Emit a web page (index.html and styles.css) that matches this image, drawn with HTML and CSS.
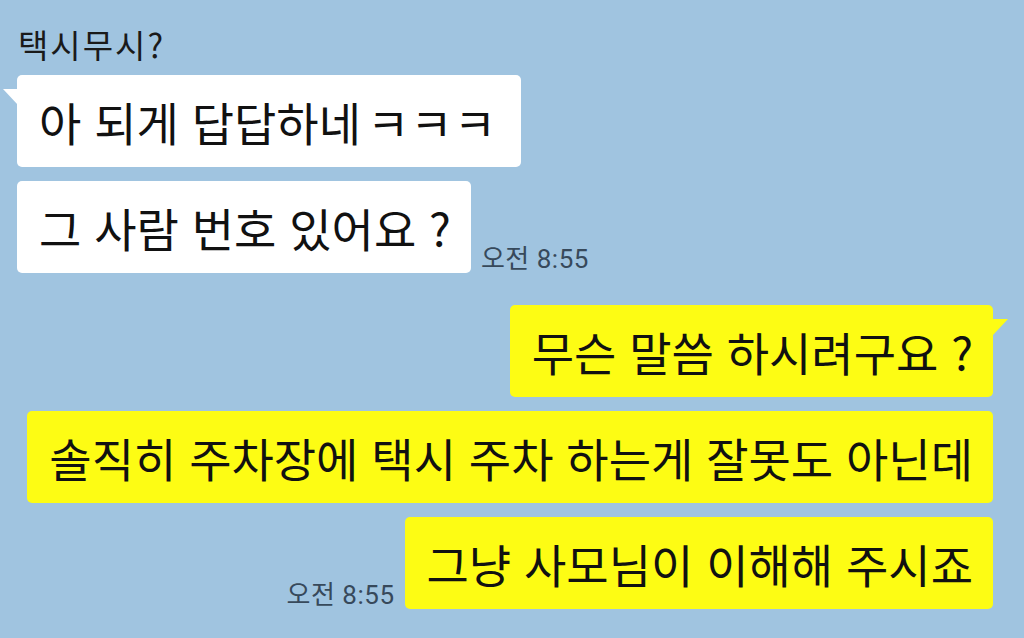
FILE: index.html
```html
<!DOCTYPE html>
<html lang="ko">
  <head>
    <meta charset="UTF-8" />
    <meta name="viewport" content="width=device-width, initial-scale=1.0" />
    <title>택시무시?</title>
    <link rel="stylesheet" href="styles.css">
  </head>
  <body>
    <div class="chat">
      <div class="group left">
        <div class="sender">택시무시?</div>
        <div class="row">
          <div class="bubble first">아 되게 답답하네 <span class="laugh">ㅋㅋㅋ</span></div>
        </div>
        <div class="row">
          <div class="bubble">그 사람 번호 있어요 ?</div>
          <span class="time">오전 8:55</span>
        </div>
      </div>

      <div class="group right">
        <div class="row">
          <div class="bubble first">무슨 말씀 하시려구요 ?</div>
        </div>
        <div class="row">
          <div class="bubble">솔직히 주차장에 택시 주차 하는게 잘못도 아닌데</div>
        </div>
        <div class="row">
          <span class="time">오전 8:55</span>
          <div class="bubble">그냥 사모님이 이해해 주시죠</div>
        </div>
      </div>
    </div>
  </body>
</html>
```

FILE: styles.css
```css
* {
  margin: 0;
  padding: 0;
  box-sizing: border-box;
}
body {
  font-family: "Noto Sans CJK KR", "Noto Sans", sans-serif;
  background-color: #a0c4e0;
  color: #111;
  height: 638px;
  overflow: hidden;
}
.chat {
  display: flex;
  flex-direction: column;
  gap: 32px;
  padding: 22px 31px 0 17px;
}
.group {
  display: flex;
  flex-direction: column;
  gap: 14px;
}
.group.left .sender {
  font-size: 33px;
  line-height: 44px;
  letter-spacing: 2px;
  margin: 0 0 -5px 1px;
  color: #1a1a1a;
}
.row {
  display: flex;
  align-items: flex-end;
  gap: 10px;
}
.group.right .row {
  justify-content: flex-end;
}
.bubble {
  position: relative;
  height: 92px;
  display: flex;
  align-items: center;
  padding: 0 20px 0 22px;
  font-size: 46px;
  white-space: nowrap;
  border-radius: 5px;
}
.bubble .laugh {
  margin-left: 6px;
  padding-right: 4px;
  letter-spacing: 1px;
}
.group.left .bubble {
  background-color: #fff;
}
.group.right .bubble {
  background-color: #fdfc14;
}
.bubble.first::before {
  content: "";
  position: absolute;
  top: 14px;
  width: 15px;
  height: 16px;
}
.group.left .bubble.first::before {
  left: -14px;
  background-color: #fff;
  clip-path: polygon(0 0, 100% 0, 100% 100%);
}
.group.right .bubble.first::before {
  right: -15px;
  background-color: #fdfc14;
  clip-path: polygon(0 0, 100% 0, 0 100%);
}
.time {
  font-family: Roboto, "Noto Sans CJK KR", sans-serif;
  font-size: 26px;
  line-height: 1;
  letter-spacing: 0.5px;
  color: #37495b;
  margin-bottom: 1px;
  white-space: nowrap;
}
```
